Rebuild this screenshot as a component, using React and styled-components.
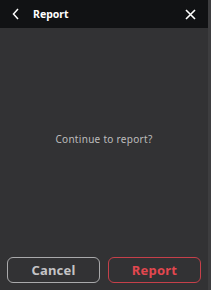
import React from "react";
import styled, { createGlobalStyle } from "styled-components";

const GlobalStyle = createGlobalStyle`
    html, body {
        margin: 0;
        padding: 0;
        background: #333335;
    }
    #root {
        height: 290px;
    }
`;

const Panel = styled.div`
    width: 211px;
    height: 290px;
    display: flex;
    font-family: "Noto Sans", "Open Sans", sans-serif;
    overflow: hidden;
`;

const Main = styled.div`
    flex: 1;
    display: flex;
    flex-direction: column;
    background: #323234;
`;

const Edge = styled.div`
    width: 3px;
    background: #3d3d3f;
`;

const Header = styled.div`
    height: 28px;
    display: flex;
    align-items: center;
    padding: 0 12px 0 10px;
    background: #111214;
    color: #ffffff;
`;

const IconButton = styled.div`
    width: 12px;
    height: 12px;
    display: flex;
    align-items: center;
    justify-content: center;
`;

const Title = styled.div`
    flex: 1;
    margin-left: 11px;
    font-size: 10.5px;
    font-weight: 700;
`;

const Body = styled.div`
    flex: 1;
    display: flex;
    align-items: center;
    justify-content: center;
    padding-bottom: 8px;
    font-size: 10px;
    letter-spacing: 0.3px;
    color: #bdbdbd;
`;

const Actions = styled.div`
    display: flex;
    gap: 8px;
    padding: 0 7px 7px 7px;
`;

const Button = styled.button`
    flex: 1;
    height: 26px;
    border-radius: 6px;
    background: transparent;
    border: 1px solid ${(p) => (p.$danger ? "#c6404a" : "#a9a9ab")};
    color: ${(p) => (p.$danger ? "#e2474f" : "#c4c4c6")};
    font-family: "Noto Sans", "Open Sans", sans-serif;
    font-size: 13px;
    font-weight: 700;
    letter-spacing: 0.2px;
    padding: 0;
`;

export default function App() {
    return (
        <>
            <GlobalStyle />
            <Panel>
                <Main>
                    <Header>
                        <IconButton>
                            <svg width="8" height="12" viewBox="0 0 8 12">
                                <path d="M6 1 L1.5 6 L6 11" fill="none" stroke="#fff" strokeWidth="1.5" />
                            </svg>
                        </IconButton>
                        <Title>Report</Title>
                        <IconButton>
                            <svg width="11" height="11" viewBox="0 0 11 11">
                                <path d="M1 1 L10 10 M10 1 L1 10" fill="none" stroke="#fff" strokeWidth="1.6" />
                            </svg>
                        </IconButton>
                    </Header>
                    <Body>Continue to report?</Body>
                    <Actions>
                        <Button>Cancel</Button>
                        <Button $danger>Report</Button>
                    </Actions>
                </Main>
                <Edge />
            </Panel>
        </>
    );
}
